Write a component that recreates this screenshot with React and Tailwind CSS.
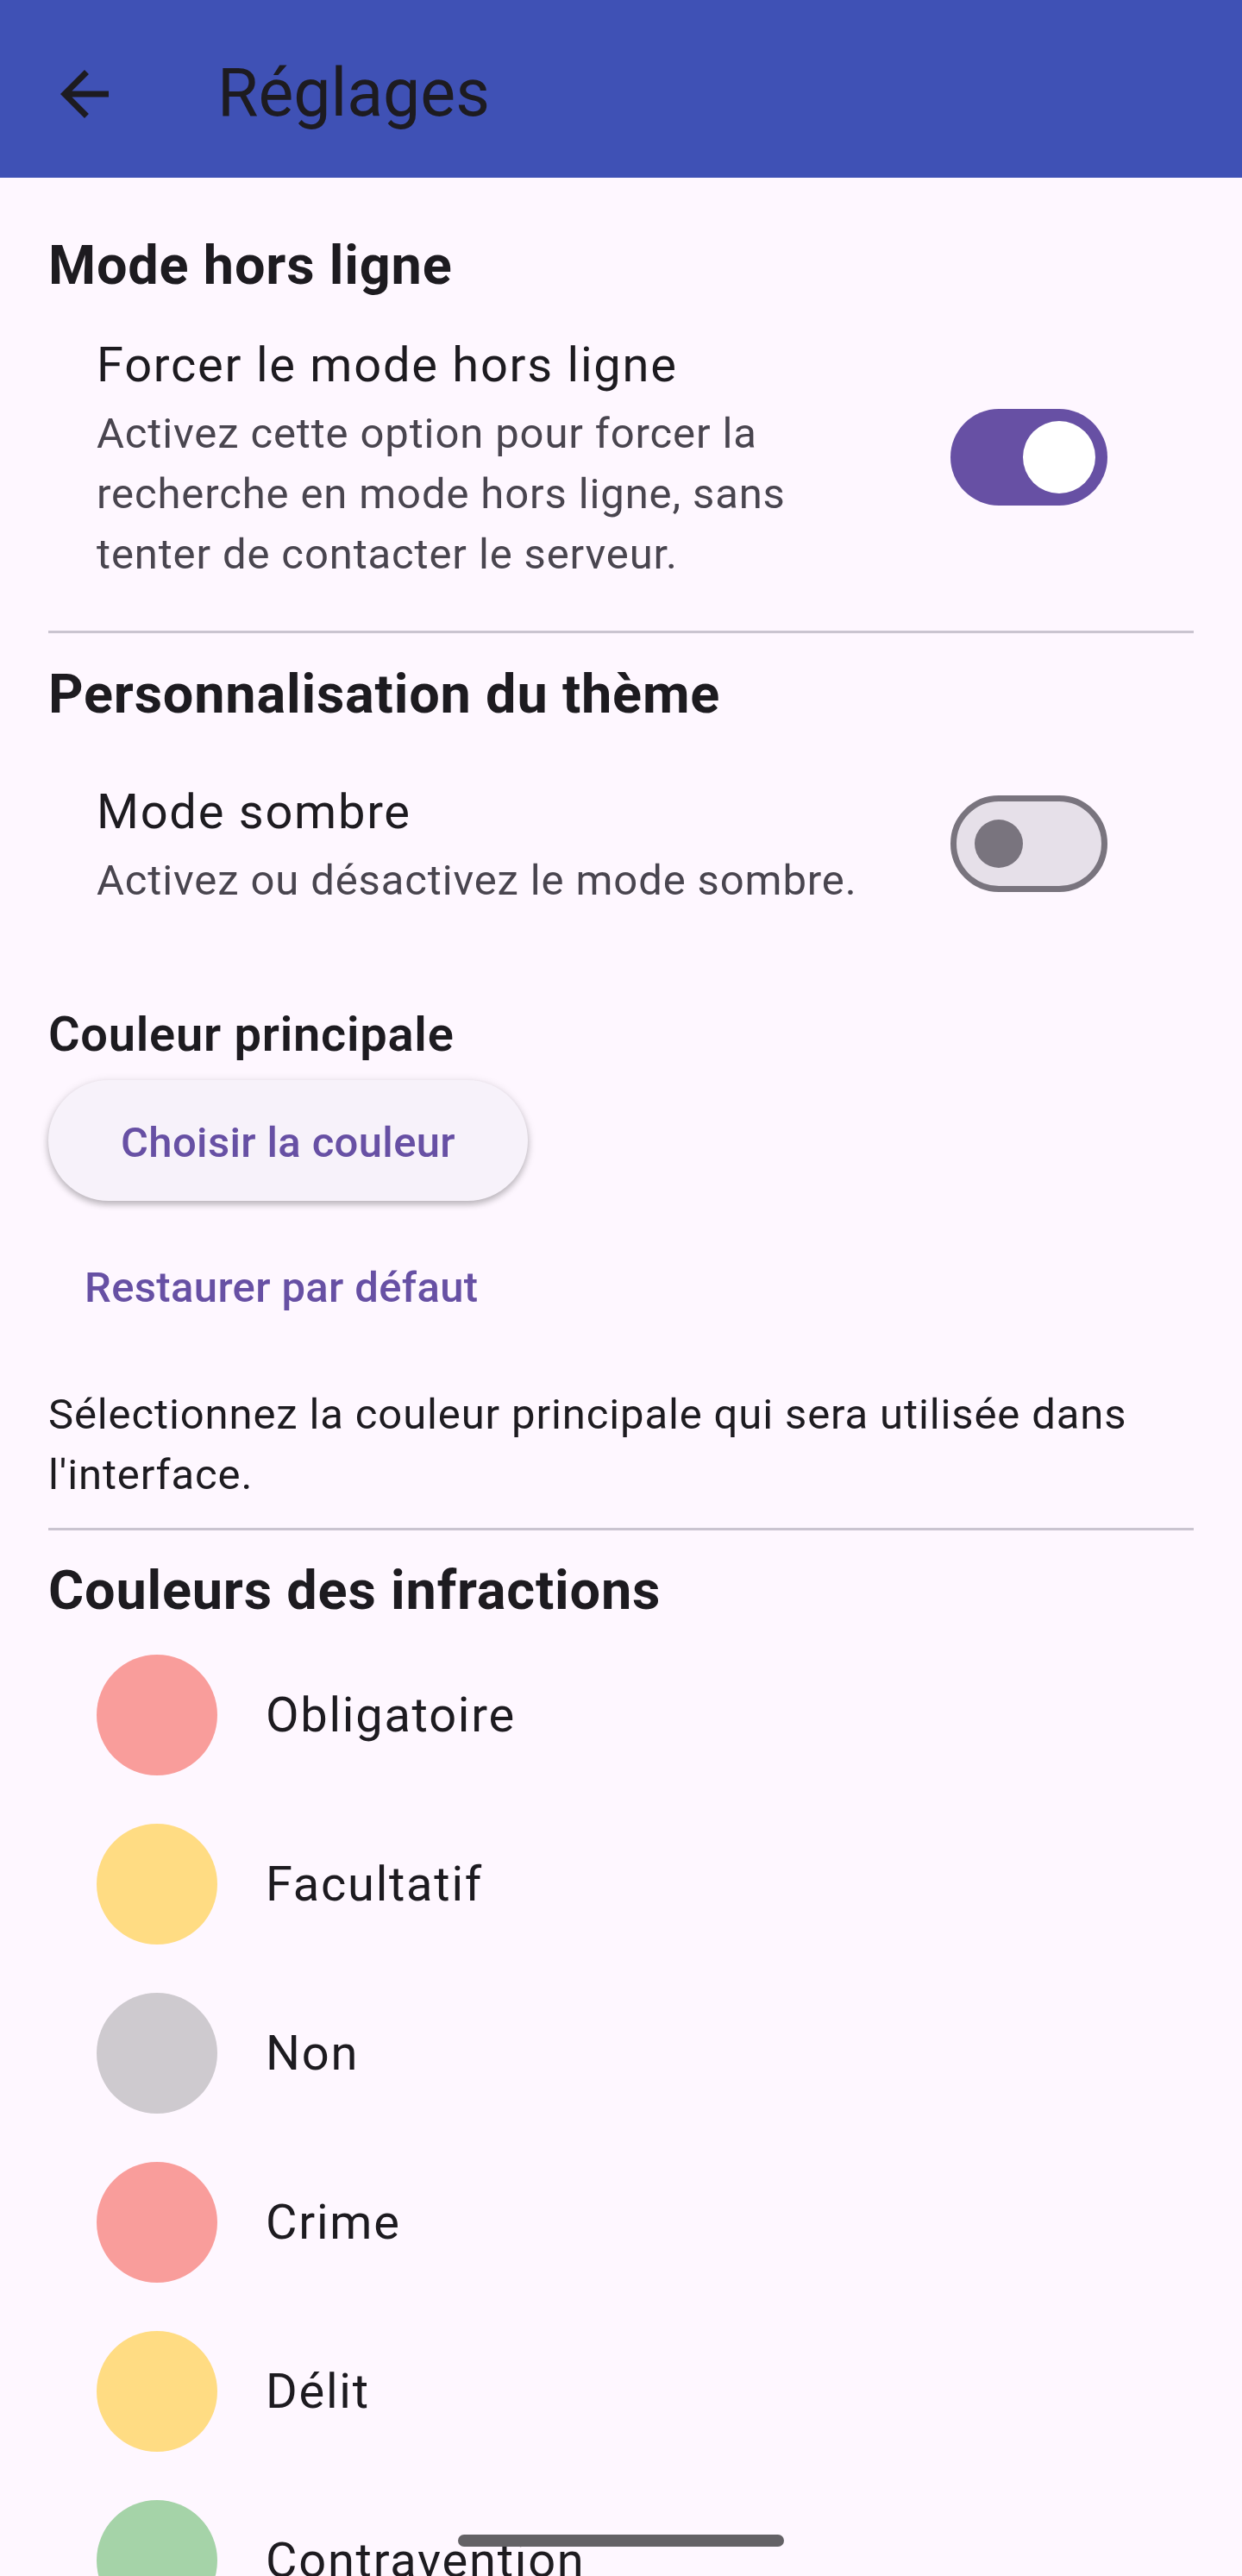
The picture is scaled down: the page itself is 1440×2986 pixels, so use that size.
import React from "react";

const infractions = [
  { label: "Obligatoire", color: "bg-[#F99D9B]" },
  { label: "Facultatif", color: "bg-[#FFDC83]" },
  { label: "Non", color: "bg-[#CECACF]" },
  { label: "Crime", color: "bg-[#F99D9B]" },
  { label: "Délit", color: "bg-[#FFDC83]" },
  { label: "Contravention", color: "bg-[#A5D3A8]" },
];

// Material 3 switch, 52x32dp at 3.5x
const Switch = ({ on }) =>
  on ? (
    <div className="w-[182px] h-[112px] rounded-full bg-[#6750A4] flex items-center justify-end pr-[14px]">
      <div className="w-[84px] h-[84px] rounded-full bg-white" />
    </div>
  ) : (
    <div className="w-[182px] h-[112px] box-border rounded-full bg-[#E6E0E9] border-[7px] border-[#79747E] flex items-center pl-[21px]">
      <div className="w-[56px] h-[56px] rounded-full bg-[#79747E]" />
    </div>
  );

const SettingTile = ({ title, subtitle, on, className = "" }) => (
  <div className={`flex items-center pl-[56px] pr-[86px] ${className}`}>
    <div className="flex-1 min-w-0 mr-[54px]">
      <div className="text-[56px] leading-[85px] tracking-[1.75px] text-[#1D1B20]">
        {title}
      </div>
      <div className="mt-[2px] text-[49px] leading-[70px] tracking-[0.875px] text-[#49454F]">
        {subtitle}
      </div>
    </div>
    <div className="w-[210px] flex justify-center">
      <Switch on={on} />
    </div>
  </div>
);

const Divider = ({ className = "" }) => (
  <div className={`h-[3px] bg-[#CAC4D0] ${className}`} />
);

const heading = "text-[63px] leading-[88px] font-bold tracking-[0.8px] text-[#1D1B20]";

export default function App() {
  return (
    <div className="relative w-[1440px] h-[2986px] overflow-hidden bg-[#FEF7FF] font-['Roboto',sans-serif]">
      {/* App bar */}
      <div className="h-[206px] bg-[#3F51B5] flex items-start">
        <svg
          className="ml-[56px] mt-[67px] w-[84px] h-[84px] shrink-0"
          viewBox="0 0 24 24"
          fill="#1D1B20"
        >
          <path d="M20 11H7.83l5.59-5.59L12 4l-8 8 8 8 1.41-1.41L7.83 13H20v-2z" />
        </svg>
        <h1 className="ml-[112px] mt-[70px] text-[77px] leading-[77px] text-[#1D1B20] font-normal">
          Réglages
        </h1>
      </div>

      <div className="px-[56px]">
        {/* Mode hors ligne */}
        <h2 className={`mt-[58px] ${heading}`}>Mode hors ligne</h2>
        <SettingTile
          className="mt-[29px]"
          title="Forcer le mode hors ligne"
          subtitle="Activez cette option pour forcer la recherche en mode hors ligne, sans tenter de contacter le serveur."
          on
        />
        <Divider className="mt-[53px]" />

        {/* Theme */}
        <h2 className={`mt-[27px] ${heading}`}>Personnalisation du thème</h2>
        <SettingTile
          className="mt-[50px]"
          title="Mode sombre"
          subtitle="Activez ou désactivez le mode sombre."
          on={false}
        />

        <h3 className="mt-[103px] text-[56px] leading-[80px] font-semibold tracking-[0.75px] text-[#1D1B20]">
          Couleur principale
        </h3>
        <div className="mt-[13px] flex flex-col items-start">
          <button className="h-[140px] px-[84px] pt-[6px] rounded-full bg-[#F7F2FA] text-[#6750A4] text-[49px] font-medium tracking-[0.35px] leading-[134px] shadow-[0_4px_7px_rgba(0,0,0,0.22),0_2px_10px_3px_rgba(0,0,0,0.07)]">
            Choisir la couleur
          </button>
          <button className="mt-[28px] h-[140px] px-[42px] pt-[6px] rounded-full text-[#6750A4] text-[49px] font-medium tracking-[0.35px] leading-[134px]">
            Restaurer par défaut
          </button>
        </div>
        <p className="mt-[45px] text-[49px] leading-[70px] tracking-[0.875px] text-[#1D1B20]">
          Sélectionnez la couleur principale qui sera utilisée dans l'interface.
        </p>
        <Divider className="mt-[26px]" />

        {/* Infractions */}
        <h2 className={`mt-[26px] ${heading}`}>Couleurs des infractions</h2>
        <div className="mt-[2px]">
          {infractions.map((item) => (
            <div key={item.label} className="h-[196px] flex items-center pl-[56px]">
              <div className={`w-[140px] h-[140px] rounded-full shrink-0 ${item.color}`} />
              <span className="ml-[56px] text-[56px] leading-[84px] tracking-[1.75px] text-[#1D1B20]">
                {item.label}
              </span>
            </div>
          ))}
        </div>
      </div>

      {/* gesture bar */}
      <div className="absolute left-[531px] top-[2938px] w-[378px] h-[14px] rounded-full bg-[#646266]" />
    </div>
  );
}
